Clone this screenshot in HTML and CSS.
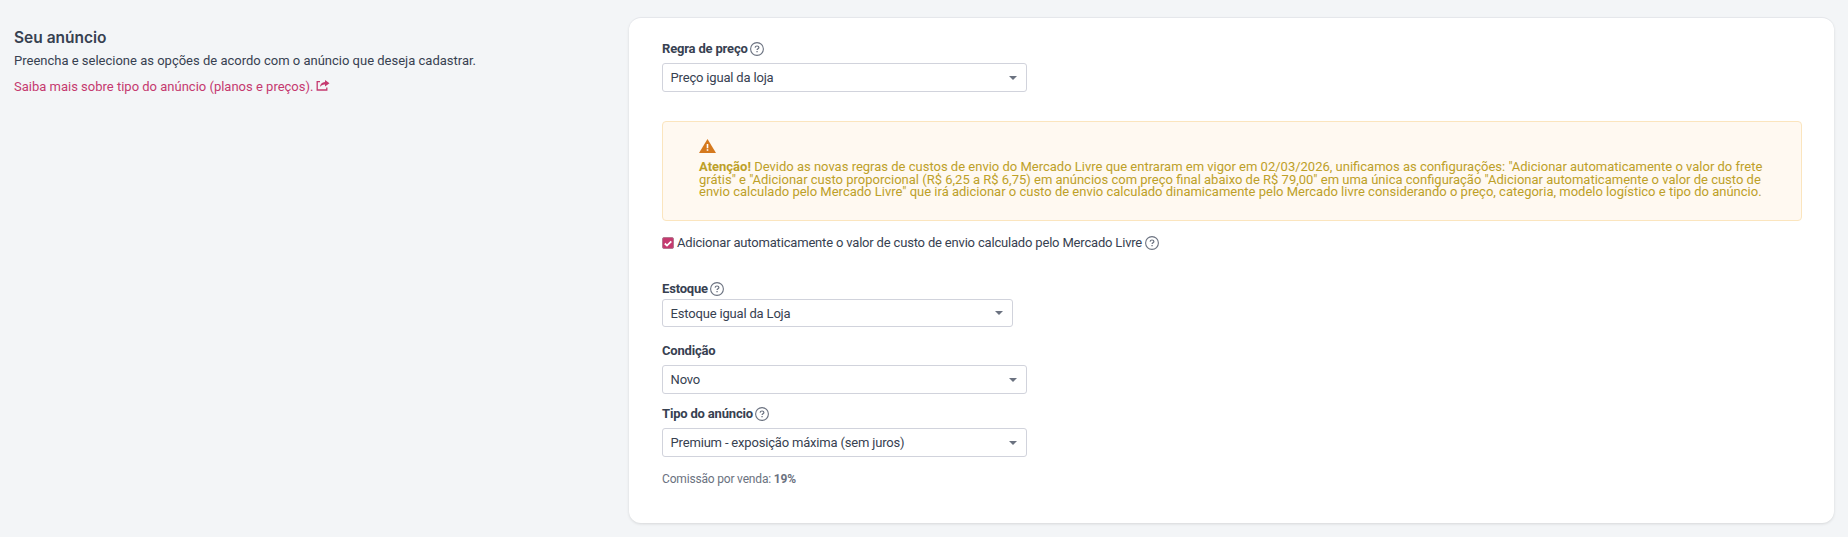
FILE: index.html
```html
<!DOCTYPE html>
<html lang="pt-BR">
<head>
  <meta charset="UTF-8">
  <meta name="viewport" content="width=device-width, initial-scale=1.0">
  <title>Seu anúncio</title>
  <link rel="stylesheet" href="styles.css">
</head>
<body>
  <svg class="sprite" width="0" height="0">
    <symbol id="help" viewBox="0 0 14 14">
      <circle cx="7" cy="7" r="6.4" fill="none" stroke="currentColor" stroke-width="1.1"/>
      <path d="M5.1 5.6C5.2 4.5 6 4 7 4c1.1 0 1.9.6 1.9 1.5 0 1.3-1.8 1.3-1.8 2.6" fill="none" stroke="currentColor" stroke-width="1.2"/>
      <path d="M6.4 9h1.3v1.3H6.4z" fill="currentColor"/>
    </symbol>
  </svg>

  <div class="page">
    <div class="intro">
      <h2>Seu anúncio</h2>
      <p>Preencha e selecione as opções de acordo com o anúncio que deseja cadastrar.</p>
      <a class="link" href="#">Saiba mais sobre tipo do anúncio (planos e preços).
        <svg class="share" viewBox="0 0 14 11" width="14" height="11">
          <path d="M4 1.6H1.2v8.4h9.6V7.6" fill="none" stroke="currentColor" stroke-width="1.3"/>
          <path d="M9 0l4.5 3.2L9 6.4V4.4C6.8 4.3 5.2 5.1 4 7c.1-3 2-4.9 5-5z" fill="currentColor"/>
        </svg>
      </a>
    </div>

    <div class="card">
      <div class="field price">
        <div class="label">Regra de preço <svg class="help"><use href="#help"/></svg></div>
        <div class="select">Preço igual da loja</div>
      </div>

      <div class="alert">
        <svg class="warning" viewBox="0 0 17 14" width="17" height="14">
          <path d="M8.5 0L17 14H0z" fill="#d5791d"/>
          <path d="M7.7 5h1.6v4.3H7.7zM7.7 10.3h1.6v1.5H7.7z" fill="#fff"/>
        </svg>
        <p><strong>Atenção!</strong> Devido as novas regras de custos de envio do Mercado Livre que entraram em vigor em 02/03/2026, unificamos as configurações: "Adicionar automaticamente o valor do frete grátis" e "Adicionar custo proporcional (R$ 6,25 a R$ 6,75) em anúncios com preço final abaixo de R$ 79,00" em uma única configuração "Adicionar automaticamente o valor de custo de envio calculado pelo Mercado Livre" que irá adicionar o custo de envio calculado dinamicamente pelo Mercado livre considerando o preço, categoria, modelo logístico e tipo do anúncio.</p>
      </div>

      <div class="check">
        <span class="checkbox">
          <svg viewBox="0 0 10 10" width="10" height="10"><path d="M1.8 5.5l2.2 2.1 4.3-4.3" fill="none" stroke="#fff" stroke-width="1.8"/></svg>
        </span>
        <span>Adicionar automaticamente o valor de custo de envio calculado pelo Mercado Livre</span>
        <svg class="help"><use href="#help"/></svg>
      </div>

      <div class="field stock">
        <div class="label">Estoque <svg class="help"><use href="#help"/></svg></div>
        <div class="select">Estoque igual da Loja</div>
      </div>

      <div class="field condition">
        <div class="label">Condição</div>
        <div class="select">Novo</div>
      </div>

      <div class="field type">
        <div class="label">Tipo do anúncio <svg class="help"><use href="#help"/></svg></div>
        <div class="select">Premium - exposição máxima (sem juros)</div>
      </div>

      <div class="fee">Comissão por venda: <strong>19%</strong></div>
    </div>
  </div>
</body>
</html>
```

FILE: styles.css
```css
* {
  box-sizing: border-box;
  margin: 0;
  padding: 0;
}

body {
  background-color: #f3f5f7;
  color: #374151;
  font-family: Roboto, sans-serif;
  font-size: 13px;
  line-height: 16px;
}

.sprite {
  display: block;
}

.page {
  display: grid;
  grid-template-columns: 615px 1205px;
  align-items: start;
  padding: 18px 14px 14px;
}

.intro {
  padding-top: 10px;
}

.intro h2 {
  font-family: Inter, sans-serif;
  font-size: 15.5px;
  font-weight: 600;
  line-height: 20px;
  margin-bottom: 5px;
}

.link {
  display: flex;
  align-items: center;
  gap: 3px;
  margin-top: 10px;
  color: #c5396f;
  text-decoration: none;
}

.share {
  margin-top: -3px;
}

.card {
  height: 505px;
  padding: 23px 32px 0 33px;
  background-color: #fff;
  border-radius: 12px;
  box-shadow: 0 -1px 0 #e5e7eb, 0 1px 3px rgba(0, 0, 0, 0.12);
  letter-spacing: -0.18px;
}

.label {
  display: flex;
  align-items: center;
  gap: 2px;
  height: 16px;
  font-weight: 700;
}

.help {
  width: 14px;
  height: 14px;
  color: #6b7280;
}

.select {
  display: flex;
  align-items: center;
  justify-content: space-between;
  width: 365px;
  height: 29px;
  padding: 0 9px 0 7.6px;
  border: 1px solid #d1d3dc;
  border-radius: 3px;
}

.select::after {
  content: "";
  border: 4px solid transparent;
  border-top-color: #6b7280;
  border-bottom: 0;
}

.price .select {
  margin-top: 6px;
}

.alert {
  height: 100px;
  margin-top: 29px;
  padding: 17px 36px;
  background-color: #fff9f1;
  border: 1px solid #fbe5be;
  border-radius: 4px;
  color: #bda028;
  letter-spacing: 0;
}

.alert p {
  margin-top: 8px;
  line-height: 12.6px;
}

.warning {
  display: block;
}

.check {
  display: flex;
  align-items: center;
  gap: 3px;
  margin-top: 14px;
}

.checkbox {
  display: flex;
  align-items: center;
  justify-content: center;
  width: 12px;
  height: 12px;
  background-color: #c5396f;
  border: 1px solid #b5798f;
  border-radius: 2px;
}

.stock {
  margin-top: 30px;
}

.stock .select {
  width: 351px;
  height: 28px;
  margin-top: 2px;
  line-height: 17px;
}

.condition {
  margin-top: 16px;
}

.condition .select,
.type .select {
  margin-top: 6px;
}

.type {
  margin-top: 12px;
}

.fee {
  margin-top: 14px;
  color: #6b7280;
  font-size: 12px;
}
```
